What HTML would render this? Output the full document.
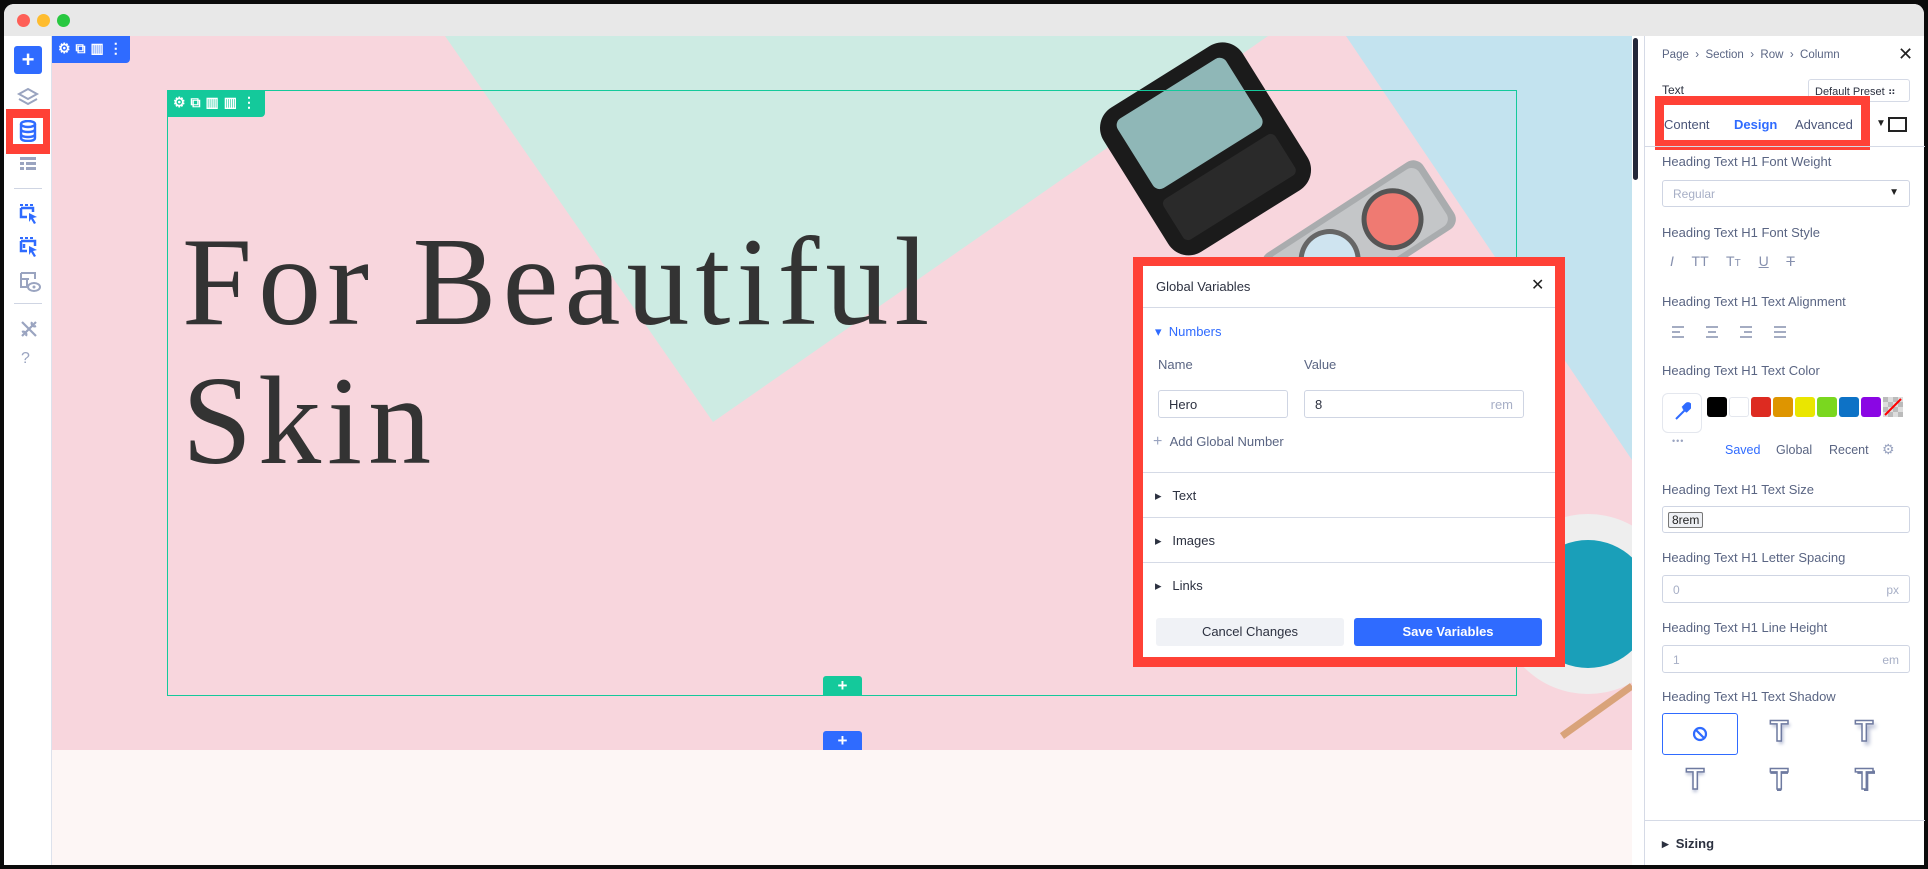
<!DOCTYPE html>
<html><head><meta charset="utf-8"><style>
*{box-sizing:border-box;margin:0;padding:0}
body{width:1928px;height:869px;background:#0b0b0b;position:relative;overflow:hidden;font-family:"Liberation Sans",sans-serif}
.abs{position:absolute}
#win{left:4px;top:4px;width:1920px;height:861px;background:#fff;border-radius:10px;overflow:hidden}
#title{left:0;top:0;width:1920px;height:32px;background:#e8e8e8}
.dot{position:absolute;top:10px;width:13px;height:13px;border-radius:50%}
.lbl{color:#5a6583;font-size:13px}
.inp{border:1px solid #cfd5e3;border-radius:3px;background:#fff}
.ico{stroke:#9aa4c0;fill:none;stroke-width:2}
</style></head><body>
<div id="win" class="abs">
<div id="title" class="abs">
<div class="dot" style="left:13px;background:#fe5f57"></div>
<div class="dot" style="left:33px;background:#febc2e"></div>
<div class="dot" style="left:53px;background:#28c840"></div>
</div>
</div>

<!-- left sidebar -->
<div class="abs" style="left:4px;top:36px;width:48px;height:829px;background:#fff;border-right:1px solid #dde2ec"></div>
<div class="abs" style="left:14px;top:46px;width:28px;height:28px;background:#2f6bff;border-radius:3px;color:#fff;font-size:22px;line-height:27px;text-align:center;font-weight:bold">+</div>
<svg class="abs" style="left:16px;top:87px" width="24" height="22" viewBox="0 0 24 22"><path class="ico" d="M12 2 L21 7 L12 12 L3 7 Z M3 12 L12 17 L21 12"/></svg>
<div class="abs" style="left:6px;top:109px;width:44px;height:45px;background:#ff4136"></div>
<div class="abs" style="left:13px;top:118px;width:30px;height:26px;background:#fff"></div>
<svg class="abs" style="left:19px;top:120px" width="18" height="22" viewBox="0 0 18 22"><g fill="none" stroke="#2f6bff" stroke-width="2.4"><ellipse cx="9" cy="4" rx="7" ry="3"/><path d="M2 4v14c0 2 3 3 7 3s7-1 7-3V4M2 9c0 2 3 3 7 3s7-1 7-3M2 14c0 2 3 3 7 3s7-1 7-3"/></g></svg>
<svg class="abs" style="left:19px;top:156px" width="20" height="16"><g fill="#9aa4c0"><rect x="1" y="1" width="16" height="3"/><rect x="1" y="6" width="4" height="3"/><rect x="7" y="6" width="10" height="3"/><rect x="1" y="11" width="4" height="3"/><rect x="7" y="11" width="10" height="3"/></g></svg>
<div class="abs" style="left:14px;top:188px;width:28px;height:1px;background:#cfd5e3"></div>
<svg class="abs" style="left:19px;top:203px" width="20" height="22"><g fill="#2f6bff"><rect x="1" y="1" width="3" height="2"/><rect x="6" y="1" width="3" height="2"/><rect x="11" y="1" width="3" height="2"/></g><path d="M2 5v9h6M2 5h12v4" stroke="#2f6bff" stroke-width="2.5" fill="none"/><path d="M10 10l8 4-4 1 3 5-2 1-3-5-2 3z" fill="#2f6bff"/></svg>
<svg class="abs" style="left:19px;top:236px" width="20" height="22"><g fill="#2f6bff"><rect x="1" y="1" width="3" height="2"/><rect x="6" y="1" width="3" height="2"/><rect x="11" y="1" width="3" height="2"/></g><path d="M2 5v10h6M2 5h14v5M5 8v4" stroke="#2f6bff" stroke-width="2.5" fill="none"/><path d="M10 10l8 4-4 1 3 5-2 1-3-5-2 3z" fill="#2f6bff"/></svg>
<svg class="abs" style="left:19px;top:271px" width="22" height="22"><path d="M2 2h14v6M2 2v14h7M2 8h8M8 8v8" stroke="#9aa4c0" stroke-width="2" fill="none"/><ellipse cx="15" cy="16" rx="6" ry="4" stroke="#9aa4c0" stroke-width="2" fill="none"/><circle cx="15" cy="16" r="1.5" fill="#9aa4c0"/></svg>
<div class="abs" style="left:14px;top:303px;width:28px;height:1px;background:#cfd5e3"></div>
<svg class="abs" style="left:19px;top:319px" width="20" height="20"><path d="M3 3l14 14M17 3L3 17M13 3a3 3 0 0 0 4 4M3 13a3 3 0 0 1 4 4" stroke="#9aa4c0" stroke-width="2.2" fill="none"/></svg>
<div class="abs" style="left:21px;top:350px;color:#9aa4c0;font-size:16px">?</div>

<!-- canvas -->
<div class="abs" style="left:52px;top:36px;width:1580px;height:829px;background:#fdf6f5;overflow:hidden">
<div class="abs" style="left:0;top:0;width:1580px;height:714px;background:#f8d6dd"></div>
<svg class="abs" style="left:0;top:0" width="1580" height="714">
<polygon points="393,0 1216,0 661,386" fill="#cdebe3"/>
<polygon points="1294,0 1580,0 1580,424" fill="#c3e3ef"/>
<g transform="translate(1153,112) rotate(-32)">
<rect x="-82" y="-84" width="164" height="170" rx="24" fill="#1b1b1b"/>
<rect x="-64" y="-70" width="128" height="82" rx="8" fill="#8fb7b7"/>
<rect x="-66" y="22" width="132" height="48" rx="6" fill="#2a2a2a"/>
</g>
<g transform="translate(1307,205) rotate(-33)">
<rect x="-95" y="-40" width="190" height="80" rx="12" fill="#a9acae"/>
<rect x="-88" y="-34" width="176" height="68" rx="9" fill="#c4c6c8"/>
<circle cx="40" cy="0" r="31" fill="#555"/><circle cx="40" cy="0" r="26" fill="#ef7a72"/>
<circle cx="-35" cy="0" r="31" fill="#666"/><circle cx="-35" cy="0" r="26" fill="#cfe4f0"/>
</g>
<circle cx="1536" cy="568" r="90" fill="#eeeeee"/>
<circle cx="1536" cy="568" r="64" fill="#1a9fb9"/>
<path d="M1510 700 L1580 650" stroke="#d9a37a" stroke-width="7"/>
</svg>
</div>
<!-- scrollbar -->
<div class="abs" style="left:1633px;top:38px;width:5px;height:142px;background:#23283a;border-radius:3px"></div>

<!-- blue toolbar -->
<div class="abs" style="left:52px;top:36px;width:78px;height:27px;background:#2f6bff;border-radius:0 0 4px 0"></div>
<div class="abs" style="left:58px;top:40px;color:#fff;font-size:14px;font-weight:bold;letter-spacing:5px">⚙⧉▥⋮</div>

<!-- green box -->
<div class="abs" style="left:167px;top:90px;width:1350px;height:606px;border:1px solid #14c99b"></div>
<div class="abs" style="left:167px;top:90px;width:98px;height:27px;background:#14c99b;border-radius:0 0 4px 0"></div>
<div class="abs" style="left:173px;top:94px;color:#fff;font-size:14px;font-weight:bold;letter-spacing:5px">⚙⧉▥▥⋮</div>
<div class="abs" style="left:182px;top:213px;font-family:'Liberation Serif',serif;font-size:126px;line-height:139px;color:#333;letter-spacing:6px;white-space:nowrap">For Beautiful<br>Skin</div>
<div class="abs" style="left:823px;top:676px;width:39px;height:19px;background:#14c99b;border-radius:3px 3px 0 0;color:#fff;text-align:center;font-size:17px;line-height:19px;font-weight:bold">+</div>
<div class="abs" style="left:823px;top:731px;width:39px;height:19px;background:#2f6bff;border-radius:3px 3px 0 0;color:#fff;text-align:center;font-size:17px;line-height:19px;font-weight:bold">+</div>

<!-- dialog -->
<div class="abs" style="left:1133px;top:257px;width:432px;height:410px;background:#ff4136"></div>
<div class="abs" style="left:1143px;top:266px;width:412px;height:391px;background:#fff">
<div class="abs" style="left:13px;top:13px;font-size:13px;color:#2c3140">Global Variables</div>
<div class="abs" style="left:388px;top:9px;font-size:16px;color:#222">✕</div>
<div class="abs" style="left:0;top:41px;width:412px;height:1px;background:#d5dae6"></div>
<div class="abs" style="left:12px;top:58px;font-size:13px;color:#2f6bff">▾&nbsp;&nbsp;Numbers</div>
<div class="abs lbl" style="left:15px;top:91px">Name</div>
<div class="abs lbl" style="left:161px;top:91px">Value</div>
<div class="abs inp" style="left:15px;top:124px;width:130px;height:28px;font-size:13px;color:#2c3140;padding:6px 10px">Hero</div>
<div class="abs inp" style="left:161px;top:124px;width:220px;height:28px;font-size:13px;color:#2c3140;padding:6px 10px">8<span style="float:right;color:#a7afc6">rem</span></div>
<div class="abs" style="left:10px;top:167px;font-size:13px;color:#5a6583"><span style="color:#9aa4c0;font-size:16px">+</span>&nbsp;&nbsp;Add Global Number</div>
<div class="abs" style="left:0;top:206px;width:412px;height:1px;background:#d5dae6"></div>
<div class="abs" style="left:12px;top:222px;font-size:13px;color:#2c3140">▸&nbsp;&nbsp;&nbsp;Text</div>
<div class="abs" style="left:0;top:251px;width:412px;height:1px;background:#d5dae6"></div>
<div class="abs" style="left:12px;top:267px;font-size:13px;color:#2c3140">▸&nbsp;&nbsp;&nbsp;Images</div>
<div class="abs" style="left:0;top:296px;width:412px;height:1px;background:#d5dae6"></div>
<div class="abs" style="left:12px;top:312px;font-size:13px;color:#2c3140">▸&nbsp;&nbsp;&nbsp;Links</div>
<div class="abs" style="left:13px;top:352px;width:188px;height:28px;background:#f0f2f6;border-radius:3px;text-align:center;line-height:28px;font-size:13px;color:#2c3140">Cancel Changes</div>
<div class="abs" style="left:211px;top:352px;width:188px;height:28px;background:#2f6bff;border-radius:3px;text-align:center;line-height:28px;font-size:13px;color:#fff;font-weight:bold">Save Variables</div>
</div>

<!-- right panel -->
<div class="abs" style="left:1644px;top:36px;width:280px;height:829px;background:#fff;border-left:1px solid #d5dae6">
<div class="abs" style="left:17px;top:13px;font-size:11.5px;color:#5a6583">Page &nbsp;›&nbsp; Section &nbsp;›&nbsp; Row &nbsp;›&nbsp; Column</div>
<div class="abs" style="left:253px;top:8px;font-size:18px;color:#222">✕</div>
<div class="abs" style="left:17px;top:47px;font-size:12px;color:#2c3140">Text</div>
<div class="abs" style="left:163px;top:43px;width:102px;height:23px;border:1px solid #d5dae6;border-radius:3px;font-size:11px;color:#2c3140;padding:5px 6px">Default Preset ⠶</div>
<div class="abs" style="left:10px;top:60px;width:215px;height:54px;background:#ff4136"></div>
<div class="abs" style="left:19px;top:69px;width:197px;height:35px;background:#fff"></div>
<div class="abs" style="left:19px;top:81px;font-size:13px;color:#4a5578">Content</div>
<div class="abs" style="left:89px;top:81px;font-size:13px;color:#2f6bff;font-weight:bold">Design</div>
<div class="abs" style="left:150px;top:81px;font-size:13px;color:#4a5578">Advanced</div>
<div class="abs" style="left:231px;top:82px;font-size:10px;color:#222">▼</div>
<div class="abs" style="left:243px;top:81px;width:19px;height:15px;border:2px solid #222"></div>
<div class="abs" style="left:0;top:110px;width:280px;height:1px;background:#d5dae6"></div>

<div class="abs lbl" style="left:17px;top:118px">Heading Text H1 Font Weight</div>
<div class="abs inp" style="left:17px;top:144px;width:248px;height:27px;padding:6px 10px;font-size:12px;color:#a7afc6">Regular<span style="float:right;color:#222;font-size:10px">▼</span></div>
<div class="abs lbl" style="left:17px;top:189px">Heading Text H1 Font Style</div>
<div class="abs" style="left:25px;top:217px;font-size:14px;color:#8690ae;word-spacing:14px"><i>I</i> TT T<span style="font-size:10px">T</span> <u>U</u> <s>T</s></div>
<div class="abs lbl" style="left:17px;top:258px">Heading Text H1 Text Alignment</div>
<svg class="abs" style="left:25px;top:289px" width="120" height="14"><g stroke="#8690ae" stroke-width="1.6"><path d="M2 2h12M2 7h8M2 12h12"/><path d="M36 2h12M38 7h8M36 12h12"/><path d="M70 2h12M74 7h8M70 12h12"/><path d="M104 2h12M104 7h12M104 12h12"/></g></svg>
<div class="abs lbl" style="left:17px;top:327px">Heading Text H1 Text Color</div>
<div class="abs" style="left:17px;top:357px;width:40px;height:40px;border:1px solid #e4e7ee;border-radius:6px"></div>
<svg class="abs" style="left:28px;top:366px" width="18" height="20"><path d="M3 17l9-9M10 6l4 4M13 2a2 2 0 0 1 4 4l-3 3-4-4z" stroke="#2f6bff" stroke-width="2" fill="#2f6bff"/></svg>
<div class="abs" style="left:27px;top:400px;font-size:9px;color:#9aa4c0;letter-spacing:1px">•••</div>
<div class="abs" style="left:62px;top:361px;width:20px;height:20px;background:#000;border-radius:3px"></div>
<div class="abs" style="left:84px;top:361px;width:20px;height:20px;background:#fff;border:1px solid #e4e7ee;border-radius:3px"></div>
<div class="abs" style="left:106px;top:361px;width:20px;height:20px;background:#dd2b21;border-radius:3px"></div>
<div class="abs" style="left:128px;top:361px;width:20px;height:20px;background:#de9500;border-radius:3px"></div>
<div class="abs" style="left:150px;top:361px;width:20px;height:20px;background:#eae600;border-radius:3px"></div>
<div class="abs" style="left:172px;top:361px;width:20px;height:20px;background:#7ad71f;border-radius:3px"></div>
<div class="abs" style="left:194px;top:361px;width:20px;height:20px;background:#0d72c6;border-radius:3px"></div>
<div class="abs" style="left:216px;top:361px;width:20px;height:20px;background:#8a06e4;border-radius:3px"></div>
<svg class="abs" style="left:238px;top:361px" width="20" height="20"><rect width="20" height="20" fill="#ddd"/><path d="M0 0h5v5H0zM10 0h5v5h-5zM5 5h5v5H5zM15 5h5v5h-5zM0 10h5v5H0zM10 10h5v5h-5zM5 15h5v5H5zM15 15h5v5h-5z" fill="#bbb"/><path d="M2 18L18 2" stroke="red" stroke-width="2"/></svg>
<div class="abs" style="left:80px;top:407px;font-size:12.5px;color:#2f6bff">Saved</div>
<div class="abs" style="left:131px;top:407px;font-size:12.5px;color:#5a6583">Global</div>
<div class="abs" style="left:184px;top:407px;font-size:12.5px;color:#5a6583">Recent</div>
<div class="abs" style="left:237px;top:405px;font-size:14px;color:#9aa4c0">⚙</div>

<div class="abs lbl" style="left:17px;top:446px">Heading Text H1 Text Size</div>
<div class="abs inp" style="left:17px;top:470px;width:248px;height:27px"></div>
<div class="abs" style="left:23px;top:476px;border:1px solid #777;background:#eef0f4;font-size:12px;padding:0 3px;color:#222;border-radius:2px">8rem</div>
<div class="abs lbl" style="left:17px;top:514px">Heading Text H1 Letter Spacing</div>
<div class="abs inp" style="left:17px;top:539px;width:248px;height:28px;padding:7px 10px;font-size:12px;color:#a7afc6">0<span style="float:right">px</span></div>
<div class="abs lbl" style="left:17px;top:584px">Heading Text H1 Line Height</div>
<div class="abs inp" style="left:17px;top:609px;width:248px;height:28px;padding:7px 10px;font-size:12px;color:#a7afc6">1<span style="float:right">em</span></div>
<div class="abs lbl" style="left:17px;top:653px">Heading Text H1 Text Shadow</div>
<div class="abs" style="left:17px;top:677px;width:76px;height:42px;border:1.5px solid #2f6bff;border-radius:3px"></div>
<svg class="abs" style="left:47px;top:690px" width="16" height="16"><circle cx="8" cy="8" r="6" stroke="#2f6bff" stroke-width="2.2" fill="none"/><path d="M4 4l8 8" stroke="#2f6bff" stroke-width="2.2"/></svg>
<div class="abs" style="left:125px;top:679px;font-size:30px;font-weight:bold;color:#fff;-webkit-text-stroke:1.5px #6e7aa0;text-shadow:2px 3px 3px #b8bfd6">T</div>
<div class="abs" style="left:210px;top:679px;font-size:30px;font-weight:bold;color:#fff;-webkit-text-stroke:1.5px #6e7aa0;text-shadow:3px 4px 4px #aab2cc">T</div>
<div class="abs" style="left:41px;top:727px;font-size:30px;font-weight:bold;color:#fff;-webkit-text-stroke:1.5px #6e7aa0;text-shadow:0 3px 3px #b8bfd6">T</div>
<div class="abs" style="left:125px;top:727px;font-size:30px;font-weight:bold;color:#fff;-webkit-text-stroke:1.5px #6e7aa0;text-shadow:0 2px 0 #6e7aa0">T</div>
<div class="abs" style="left:210px;top:727px;font-size:30px;font-weight:bold;color:#fff;-webkit-text-stroke:1.5px #6e7aa0;text-shadow:2px 2px 0 #6e7aa0">T</div>
<div class="abs" style="left:0;top:784px;width:280px;height:1px;background:#d5dae6"></div>
<div class="abs" style="left:17px;top:800px;font-size:13px;color:#2c3140;font-weight:bold">▸&nbsp;&nbsp;Sizing</div>
</div>
</body></html>
